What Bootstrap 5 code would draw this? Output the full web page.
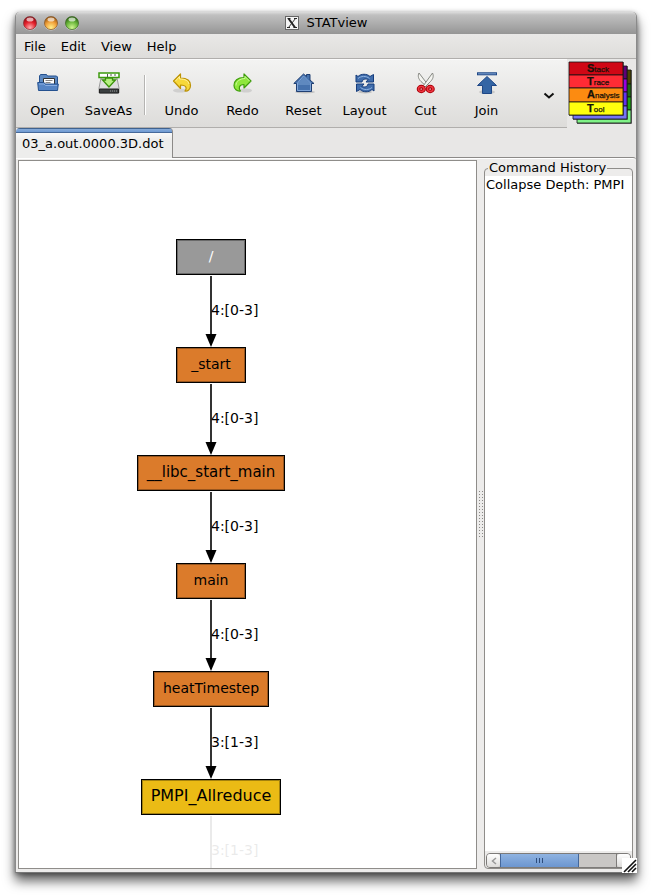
<!DOCTYPE html>
<html lang="en">
<head>
<meta charset="utf-8">
<meta name="viewport" content="width=device-width, initial-scale=1">
<title>STATview</title>
<link href="https://cdn.jsdelivr.net/npm/bootstrap@5.3.0/dist/css/bootstrap.min.css" rel="stylesheet">
<style>
body { font-family: "DejaVu Sans", sans-serif; font-size: 13px; line-height: 16px; color: #000; background: #fff; }
.desk { height: 100vh; padding: 12px 19px 22px 15px; }
.app-window { background: #e8e7e6; border-left: 1px solid #8a8a8a; border-right: 1px solid #8a8a8a; border-bottom: 1px solid #777; border-radius: 5px 5px 0 0; box-shadow: 0 8px 12px rgba(0,0,0,.62), 0 1px 5px rgba(0,0,0,.4); }
.title-bar { height: 22px; background: linear-gradient(#dcdcdc 0, #c0c0c0 3px, #959595); border-radius: 5px 5px 0 0; }
.title-bar h1 { font-family: "DejaVu Sans", sans-serif; font-size: 13px; line-height: 16px; }
.lights { left: 6px; top: 3px; gap: 5px; }
.light { width: 16px; height: 16px; padding: 0; border: 0; background: none; display: block; }
.light svg, .tool svg { display: block; }
.menu-bar { height: 25px; padding: 1px 0 0 8px; gap: 15px; background: linear-gradient(#e9e8e7, #dedddb); border-bottom: 1px solid #b0aeac; }
.menu-bar button, .tool, .more { border: 0; background: none; padding: 0; color: #000; }
.tool-row { height: 69px; }
.tool-bar { padding: 3px 0 0 1px; background: linear-gradient(#f3f3f2, #dddcda); border-bottom: 1px solid #b0aeac; border-top: 1px solid #fbfbfb; }
.tool { width: 61px; gap: 9px; }
.tool-sep { width: 2px; height: 40px; margin: 0 5px; background: linear-gradient(90deg, #b5b4b2 50%, #fff 50%); }
.more { width: 36px; }
.brand { width: 69px; padding: 2px 0 0 1px; }
.tabs { height: 29px; }
.doc-tab { width: 157px; height: 30px; border: 1px solid #8c8a88; border-top: 0; border-left: 0; border-bottom: 0; border-radius: 4px 4px 0 0; background: linear-gradient(#3f628f 1px, #86abd9 1px, #6f9ad3 4px, #46699a 4px, #46699a 5px, #fafafa 5px, #ededec 12px); padding: 1px 0 0 6px; text-align: left; color: #000; z-index: 1; }
.page-body { border-top: 1px solid #8c8a88; border-radius: 0 3px 0 0; background: #edeceb; padding: 2px 3px 3px 2px; box-shadow: inset 0 1px #fff; }
.graph { background: #fff; border: 1px solid #8f8d8a; }
.graph-col { width: 384px; padding-top: 78px; }
.node { min-width: 70px; height: 36px; padding: 0 9px 2px; border: 1px solid #000; outline: 1px solid rgba(0,0,0,.3); outline-offset: -2px; background: #db7b2b; font-size: 14px; }
.node-root { background: #999; color: #fff; }
.node-lg { font-size: 15px; }
.node-xl { font-size: 16px; background: #ebbb15; }
.edge { height: 72px; font-size: 14px; }
.edge svg { display: block; }
.edge span { left: 50%; top: 27px; white-space: nowrap; }
.edge-faint { opacity: .08; }
.splitter { width: 7px; }
.history fieldset { border: 1px solid #8f8d8a; border-radius: 4px; margin-top: 8px; padding: 0 1px; }
.history legend { font-size: 13px; line-height: 16px; float: none; width: auto; margin: 0 0 0 2px; padding: 0 1px; }
.history fieldset { margin-top: 0; }
.side { width: 149px; }
.log { background: #fff; margin: 0 -1px; padding-left: 1px; line-height: 18px; }
.h-scroll { height: 15px; margin-top: 2px; border: 1px solid #7d7b79; border-radius: 4px; background: #c9c7c5; }
.h-scroll button { width: 13px; padding: 0; border: 0; background: linear-gradient(#fff, #dddcda); border-radius: 3px; }
.thumb { width: 79px; background: linear-gradient(#8fb3e1, #6c96d0); border: 1px solid #44679a; border-width: 0 1px; }
.rest { border-right: 1px solid #7d7b79; }
.grip { right: -1px; bottom: -1px; width: 15px; height: 15px; background: #fff; z-index: 2; }
.grip svg { display: block; }
</style>
<script src="https://cdn.jsdelivr.net/npm/bootstrap@5.3.0/dist/js/bootstrap.bundle.min.js"></script>
</head>
<body>
<div class="desk">
<main class="app-window d-flex flex-column h-100 position-relative">
  <header class="title-bar d-flex align-items-center justify-content-center position-relative flex-shrink-0">
    <div class="lights d-flex position-absolute">
      <button class="light" aria-label="Close"><svg width="16" height="16"><defs><radialGradient id="r1" cx=".5" cy=".85" r=".8"><stop offset="0" stop-color="#ffb0b0"/><stop offset=".55" stop-color="#e3202b"/><stop offset="1" stop-color="#8a0a12"/></radialGradient><radialGradient id="r2" cx=".5" cy=".85" r=".8"><stop offset="0" stop-color="#fff08a"/><stop offset=".55" stop-color="#f2a13a"/><stop offset="1" stop-color="#93500c"/></radialGradient><radialGradient id="r3" cx=".5" cy=".85" r=".8"><stop offset="0" stop-color="#d0f590"/><stop offset=".55" stop-color="#6cb83c"/><stop offset="1" stop-color="#28600f"/></radialGradient></defs><circle cx="8" cy="8.500" r="7" fill="#d0d0d0"/><circle cx="8" cy="8" r="6.600" fill="url(#r1)" stroke="#7b3538" stroke-width=".7"/><ellipse cx="8" cy="4.500" rx="3.500" ry="2" fill="#fff" opacity=".65"/></svg></button>
      <button class="light" aria-label="Minimize"><svg width="16" height="16"><circle cx="8" cy="8.500" r="7" fill="#d0d0d0"/><circle cx="8" cy="8" r="6.600" fill="url(#r2)" stroke="#80552a" stroke-width=".7"/><ellipse cx="8" cy="4.500" rx="3.500" ry="2" fill="#fff" opacity=".65"/></svg></button>
      <button class="light" aria-label="Zoom"><svg width="16" height="16"><circle cx="8" cy="8.500" r="7" fill="#d0d0d0"/><circle cx="8" cy="8" r="6.600" fill="url(#r3)" stroke="#3d6426" stroke-width=".7"/><ellipse cx="8" cy="4.500" rx="3.500" ry="2" fill="#fff" opacity=".65"/></svg></button>
    </div>
    <svg class="me-2" width="14" height="14" aria-hidden="true"><rect x=".5" y=".5" width="13" height="13" fill="#f4f4f4" stroke="#666"/><path d="M2.500 2.500h3M9 2.500h3M2 11.500h3M8.500 11.500h3.500" stroke="#222"/><path d="M3.500 2.500l6.500 9" stroke="#222" stroke-width="2"/><path d="M10.500 2.500l-7 9" stroke="#333" stroke-width="1"/></svg>
    <h1 class="m-0">STATview</h1>
  </header>
  <nav class="menu-bar d-flex align-items-center flex-shrink-0" aria-label="Main menu">
    <button>File</button><button>Edit</button><button>View</button><button>Help</button>
  </nav>
  <div class="tool-row d-flex flex-shrink-0">
    <div class="tool-bar d-flex align-items-center flex-grow-1" role="toolbar" aria-label="Actions">
      <button class="tool d-flex flex-column align-items-center">
        <svg width="22" height="22" viewBox="0 0 22 22"><path d="M2.500 11V4l1-1.500h6l1 1.500h9l1 1v8z" fill="#5c88c0" stroke="#24518f"/><path d="M6.500 6.500h11v7h-11z" fill="#fff" stroke="#333"/><path d="M8.500 8.500h7M8.500 10.500h5" stroke="#888"/><path d="M.7 10.500h6l2 1.500h12.600l-.8 6.500H1.500z" fill="#5584c4" stroke="#24518f"/><path d="M2 12h5l1.500 1.500H20" fill="none" stroke="#89ade0"/></svg>
        <span>Open</span></button>
      <button class="tool d-flex flex-column align-items-center">
        <svg width="22" height="22" viewBox="0 0 22 22"><path d="M3 6h16l2 10v5H1v-5z" fill="#dedede" stroke="#888" stroke-width=".8"/><path d="M1.500 17h19v4h-19z" fill="#3b3f40" stroke="#222"/><path d="M12 19h7" stroke="#999" stroke-dasharray="1 1"/><rect x="1" y="1" width="20" height="4.500" fill="#fff" stroke="#3c9a0d" stroke-width="1.500"/><path d="M9.500 2v3M12 3h2M16 3h2" stroke="#555"/><path d="M7.500 6v2h-3L11 15l6.500-7h-3V6z" fill="#b5ee80" stroke="#399208" stroke-width="1.300"/></svg>
        <span>SaveAs</span></button>
      <div class="tool-sep"></div>
      <button class="tool d-flex flex-column align-items-center">
        <svg width="22" height="22" viewBox="0 0 22 22"><ellipse cx="9" cy="18.500" rx="7" ry="2" fill="#aaa" opacity=".4"/><path d="M9.500 2v4c7 0 10 3 10 7.500 0 4-3 6-5.500 5.500 2-2 2-6-4.500-6v3.500L2.500 9z" fill="#f7d83a" stroke="#bd9305" stroke-width="1.200" stroke-linejoin="round"/><path d="M4.500 9l4-4.500V7c6 0 9 2 9.500 5" fill="none" stroke="#fff09a"/></svg>
        <span>Undo</span></button>
      <button class="tool d-flex flex-column align-items-center">
        <svg width="22" height="22" viewBox="0 0 22 22"><ellipse cx="14" cy="18.500" rx="6" ry="2" fill="#aaa" opacity=".4"/><path d="M12 2v3.500C5.500 5.500 2 9 2 13.500 2 17 5 19.500 8.500 19 6.500 16.500 6.500 12.500 12 12.500V16l7-7z" fill="#8fe73c" stroke="#3f9d0c" stroke-width="1.200" stroke-linejoin="round"/><path d="M17.500 9L13 4.500v2c-5 0-9 3-9 7" fill="none" stroke="#c9f99a"/></svg>
        <span>Redo</span></button>
      <button class="tool d-flex flex-column align-items-center">
        <svg width="22" height="22" viewBox="0 0 22 22"><ellipse cx="12" cy="20" rx="10" ry="1.500" fill="#999" opacity=".5"/><path d="M3.500 19.500V11.500H.8L10.500 2l3 2.500V2.500h3.500V8l4 3.500h-2.500v8z" fill="#4672ad" stroke="#1f3f73"/><path d="M4.500 18.500V11L10.500 4l7 7v7.500z" fill="none" stroke="#7fa5d8"/><path d="M5 11l5.500-6 6.500 6v2H5z" fill="#78a0d2" opacity=".5"/></svg>
        <span>Reset</span></button>
      <button class="tool d-flex flex-column align-items-center">
        <svg width="22" height="22" viewBox="0 0 22 22"><ellipse cx="11" cy="20" rx="7" ry="1.500" fill="#999" opacity=".5"/><path id="cyc" d="M2 10V3l2 1.500C7 1.500 13 1.500 16 4.500L19.500 2.500v7.500H12l2.200-2.500C11.500 6.500 8.500 7 8 10z" fill="#3f6cab" stroke="#153c7c"/><use href="#cyc" transform="rotate(180 11 11)"/><path d="M4 6.500C7 4 12 3.500 15.500 6.500M18 15.500c-3 2.500-8 3-11.500 0" fill="none" stroke="#8db2e2"/></svg>
        <span>Layout</span></button>
      <button class="tool d-flex flex-column align-items-center">
        <svg width="22" height="22" viewBox="0 0 22 22"><path d="M4 1c-1.500 3-.5 6 2 8.500L12 15l1.500-1.500z" fill="#f4f4f0" stroke="#7c7e78" stroke-width=".9"/><path d="M17.500 1c1.500 3 .5 6-2 8.500L10 15l-1.500-1.500z" fill="#f4f4f0" stroke="#7c7e78" stroke-width=".9"/><g fill="#fff" stroke="#a90009" stroke-width="3.600"><ellipse cx="6.300" cy="17" rx="2.800" ry="2.400"/><ellipse cx="15.200" cy="17" rx="2.800" ry="2.400"/></g><g fill="none" stroke="#ef3640" stroke-width="1.500"><ellipse cx="6.300" cy="17" rx="2.800" ry="2.400"/><ellipse cx="15.200" cy="17" rx="2.800" ry="2.400"/></g></svg>
        <span>Cut</span></button>
      <button class="tool d-flex flex-column align-items-center">
        <svg width="22" height="22" viewBox="0 0 22 22"><ellipse cx="11" cy="20" rx="8" ry="2" fill="#999" opacity=".4"/><rect x="1.500" y=".8" width="19" height="2" fill="#7ba0d0" stroke="#1f4786"/><path d="M11 4.500L1.500 13.500h5v8h9v-8h5z" fill="#3465a4" stroke="#1f4786"/></svg>
        <span>Join</span></button>
      <button class="more ms-auto align-self-center" aria-label="More tools"><svg width="12" height="8"><path d="M1.500 1.500L6 5.500l4.500-4" fill="none" stroke="#111" stroke-width="2"/></svg></button>
    </div>
    <div class="brand flex-shrink-0">
      <svg width="66" height="64" viewBox="0 0 66 64" role="img" aria-label="Stack Trace Analysis Tool" font-family="Liberation Sans, sans-serif">
        <g stroke="#111" stroke-width=".8">
          <path d="M9 9h54v14H9z" fill="#4b4600"/><path d="M9 23h54v13H9z" fill="#1e6a14"/><path d="M9 36h54v13H9z" fill="#1fa413"/><path d="M9 49h54v13H9z" fill="#7ff287"/>
          <path d="M5 5h54v13H5z" fill="#5e0078"/><path d="M5 18h54v13H5z" fill="#9600e0"/><path d="M5 31h54v14H5z" fill="#6431ee"/><path d="M5 45h54v13H5z" fill="#7575f5"/>
          <path d="M1 1h54v13H1z" fill="#d00715"/><path d="M1 14h54v13H1z" fill="#ff2b35"/><path d="M1 27h54v14H1z" fill="#fc8b11"/><path d="M1 41h54v13H1z" fill="#ffff0d"/>
        </g>
        <path d="M9 62.500h54.500V9M5 58.500h54.500V5M1 54.500h54.500V1" fill="none" stroke="#222" stroke-opacity=".6"/>
        <g font-size="8" fill="#161208" stroke="#161208" stroke-width=".25"><text x="19" y="11"><tspan font-size="11" font-weight="700">S</tspan>tack</text><text x="19" y="24"><tspan font-size="11" font-weight="700">T</tspan>race</text><text x="19" y="37"><tspan font-size="11" font-weight="700">A</tspan>nalysis</text><text x="19" y="51"><tspan font-size="11" font-weight="700">T</tspan>ool</text></g>
      </svg>
    </div>
  </div>
  <div class="tabs d-flex flex-shrink-0" role="tablist"><button class="doc-tab position-relative" role="tab" aria-selected="true">03_a.out.0000.3D.dot</button></div>
  <section class="page-body d-flex flex-grow-1 overflow-hidden">
    <div class="graph flex-grow-1 overflow-hidden">
      <div class="graph-col d-flex flex-column align-items-center">
        <div class="node node-root d-flex align-items-center justify-content-center">/</div>
        <div class="edge position-relative"><svg width="12" height="72"><path d="M6 1v60" stroke="#333" stroke-width="2"/><path d="M.5 59h11L6 72z"/></svg><span class="position-absolute">4:[0-3]</span></div>
        <div class="node d-flex align-items-center justify-content-center">_start</div>
        <div class="edge position-relative"><svg width="12" height="72"><path d="M6 1v60" stroke="#333" stroke-width="2"/><path d="M.5 59h11L6 72z"/></svg><span class="position-absolute">4:[0-3]</span></div>
        <div class="node node-lg d-flex align-items-center justify-content-center">__libc_start_main</div>
        <div class="edge position-relative"><svg width="12" height="72"><path d="M6 1v60" stroke="#333" stroke-width="2"/><path d="M.5 59h11L6 72z"/></svg><span class="position-absolute">4:[0-3]</span></div>
        <div class="node d-flex align-items-center justify-content-center">main</div>
        <div class="edge position-relative"><svg width="12" height="72"><path d="M6 1v60" stroke="#333" stroke-width="2"/><path d="M.5 59h11L6 72z"/></svg><span class="position-absolute">4:[0-3]</span></div>
        <div class="node d-flex align-items-center justify-content-center">heatTimestep</div>
        <div class="edge position-relative"><svg width="12" height="72"><path d="M6 1v60" stroke="#333" stroke-width="2"/><path d="M.5 59h11L6 72z"/></svg><span class="position-absolute">3:[1-3]</span></div>
        <div class="node node-xl d-flex align-items-center justify-content-center">PMPI_Allreduce</div>
        <div class="edge edge-faint position-relative"><svg width="12" height="72"><path d="M6 1v71" stroke="#000" stroke-width="2"/></svg><span class="position-absolute">3:[1-3]</span></div>
      </div>
    </div>
    <div class="splitter d-flex align-items-center justify-content-center flex-shrink-0">
      <svg width="5" height="47" aria-hidden="true"><path d="M1.500 0v47M4.500 0v47" stroke="#8a8886" stroke-dasharray="1 2"/></svg>
    </div>
    <aside class="side history d-flex flex-column flex-shrink-0">
      <fieldset class="d-flex flex-column flex-grow-1 overflow-visible">
        <legend class="text-nowrap">Command History</legend>
        <div class="log flex-grow-1 overflow-hidden text-nowrap">Collapse Depth: PMPI</div>
        <div class="h-scroll d-flex align-items-stretch flex-shrink-0" role="group" aria-label="Horizontal scroll">
          <button class="d-flex align-items-center justify-content-center" aria-label="Scroll left"><svg width="6" height="8"><path d="M5 1L1.500 4 5 7" fill="none" stroke="#999" stroke-width="1.500"/></svg></button>
          <div class="thumb d-flex align-items-center justify-content-center"><svg width="8" height="5"><path d="M.5 0v5M3.500 0v5M6.500 0v5" stroke="#2d4c7c"/></svg></div>
          <div class="rest flex-grow-1"></div>
          <button aria-label="Scroll right"></button>
        </div>
      </fieldset>
    </aside>
  </section>
  <div class="grip position-absolute"><svg width="15" height="15"><path d="M2 14L14 2M6 14l8-8M10 14l4-4" stroke="#111" stroke-width="1.600"/></svg></div>
</main>
</div>
</body>
</html>
